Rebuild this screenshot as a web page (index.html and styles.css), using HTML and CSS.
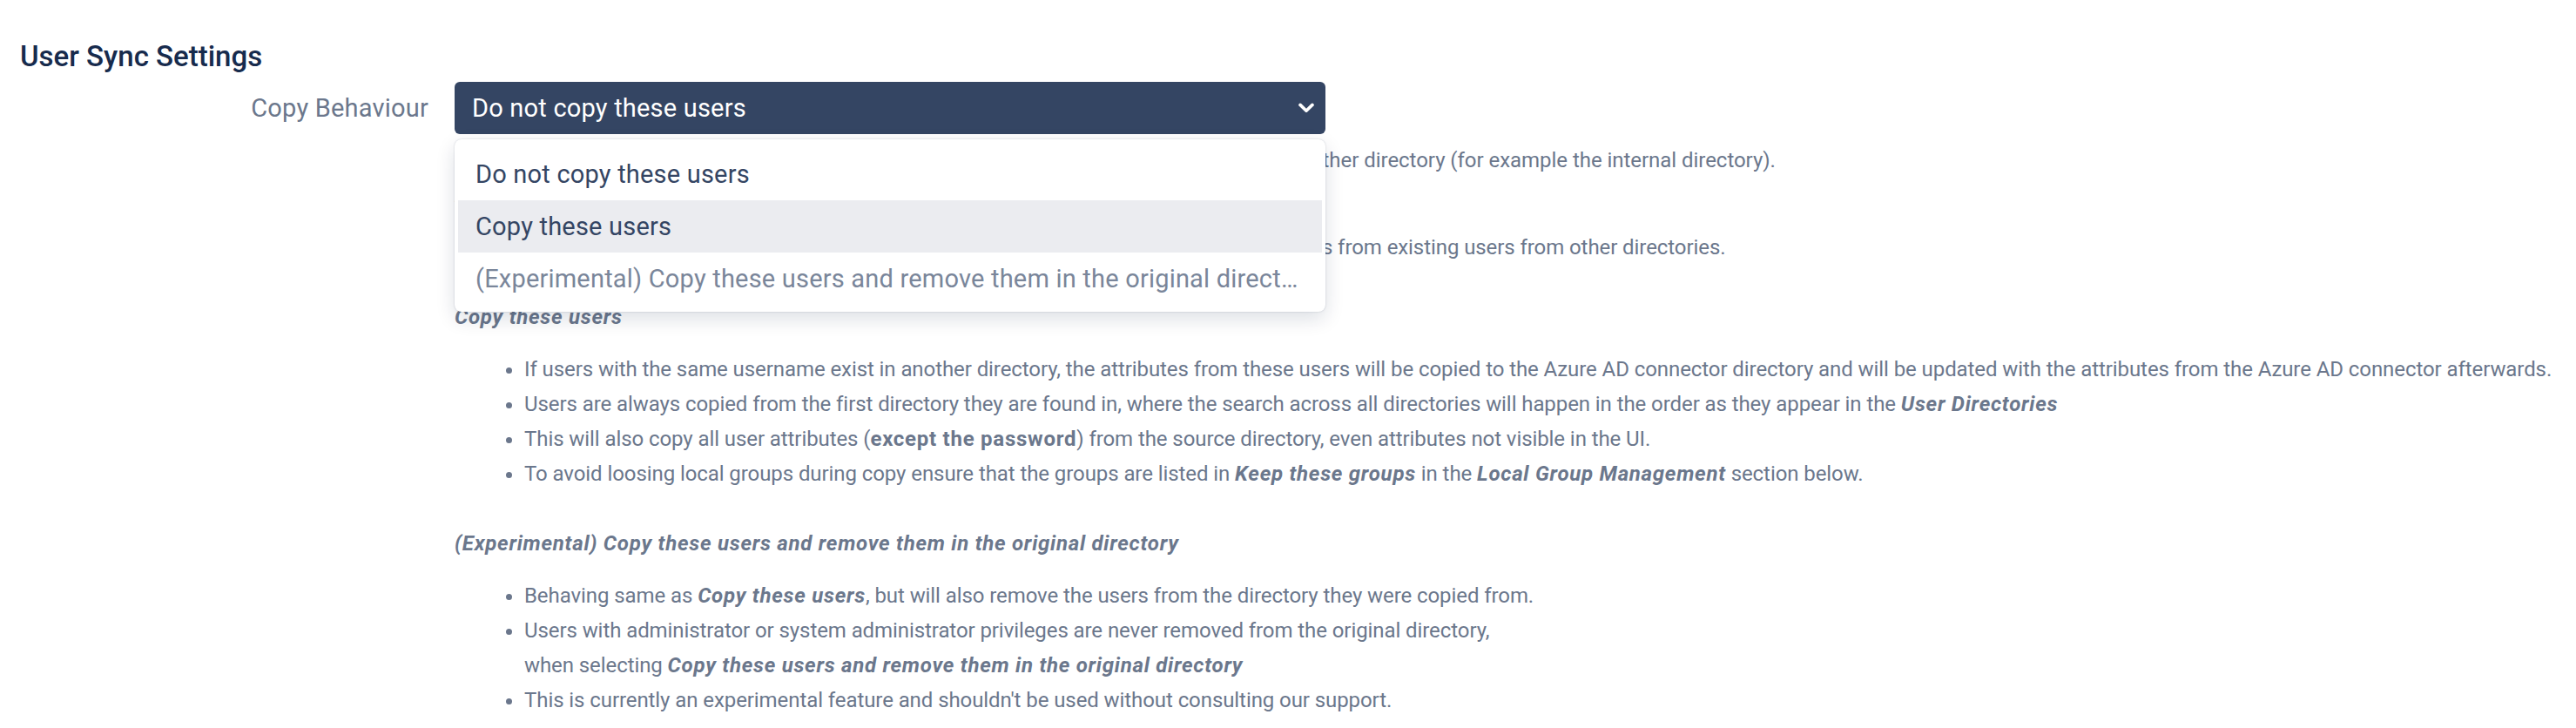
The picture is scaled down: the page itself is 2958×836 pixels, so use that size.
FILE: index.html
```html
<!DOCTYPE html>
<html lang="en">
<head>
<meta charset="utf-8">
<title>User Sync Settings</title>
<link rel="stylesheet" href="styles.css">
</head>
<body>
<div class="page">
  <h3 class="title">User Sync Settings</h3>
  <div class="row">
    <div class="label">Copy Behaviour</div>
    <div class="field">
      <div class="select">
        <span class="select-value">Do not copy these users</span>
        <svg class="chevron" width="10" height="6" viewBox="0 0 10 6" aria-hidden="true">
          <path d="M1.5 1.2 L5 4.6 L8.5 1.2" fill="none" stroke="#ffffff" stroke-width="1.8" stroke-linecap="round" stroke-linejoin="round"/>
        </svg>
      </div>
      <div class="menu">
        <div class="option">Do not copy these users</div>
        <div class="option option-active">Copy these users</div>
        <div class="option option-muted">(Experimental) Copy these users and remove them in the original direct…</div>
      </div>
      <div class="desc">
        <p class="intro">Defines how the users are handled, if a user with the same username already exists within another directory (for example the internal directory).</p>
        <p class="sec sec-first">Do not copy these users</p>
        <ul>
          <li>Users will be created in the Azure AD connector directory but will not copy any attributes from existing users from other directories.</li>
        </ul>
        <p class="sec">Copy these users</p>
        <ul>
          <li>If users with the same username exist in another directory, the attributes from these users will be copied to the Azure AD connector directory and will be updated with the attributes from the Azure AD connector afterwards.</li>
          <li>Users are always copied from the first directory they are found in, where the search across all directories will happen in the order as they appear in the <b><i>User Directories</i></b></li>
          <li>This will also copy all user attributes (<b>except the password</b>) from the source directory, even attributes not visible in the UI.</li>
          <li>To avoid loosing local groups during copy ensure that the groups are listed in <b><i>Keep these groups</i></b> in the <b><i>Local Group Management</i></b> section below.</li>
        </ul>
        <p class="sec">(Experimental) Copy these users and remove them in the original directory</p>
        <ul>
          <li>Behaving same as <b><i>Copy these users</i></b>, but will also remove the users from the directory they were copied from.</li>
          <li>Users with administrator or system administrator privileges are never removed from the original directory,<br>when selecting <b><i>Copy these users and remove them in the original directory</i></b></li>
          <li>This is currently an experimental feature and shouldn't be used without consulting our support.</li>
        </ul>
      </div>
    </div>
  </div>
</div>
</body>
</html>
```

FILE: styles.css
```css
html {
  zoom: 2;
}

body {
  margin: 0;
  background: #ffffff;
  font-family: Roboto, "Liberation Sans", Arial, sans-serif;
}

.page {
  padding: 22px 10px 0 10px;
}

.title {
  margin: 0 0 0 1.5px;
  font-size: 16.5px;
  font-weight: 500;
  line-height: 21px;
  color: #172b4d;
}

.row {
  display: flex;
  gap: 15px;
  margin-top: 4px;
}

.label {
  flex: none;
  width: 236px;
  text-align: right;
  font-size: 14.5px;
  letter-spacing: 0.1px;
  line-height: 30px;
  color: #6b778c;
}

.field {
  position: relative;
  flex: 1;
  min-width: 0;
}

.select {
  box-sizing: border-box;
  width: 500px;
  height: 30px;
  padding: 0 6px 0 10px;
  display: flex;
  align-items: center;
  justify-content: space-between;
  background: #344563;
  border-radius: 3px;
  color: #ffffff;
  font-size: 14.5px;
  letter-spacing: 0.1px;
}

.chevron {
  display: block;
}

.menu {
  position: absolute;
  top: 33px;
  left: 0;
  z-index: 2;
  box-sizing: border-box;
  width: 500px;
  padding: 5px 2px 4px;
  background: #ffffff;
  border-radius: 4px;
  box-shadow: 0 0 1px rgba(9, 30, 66, 0.22), 0 4px 11px rgba(9, 30, 66, 0.14);
}

.option {
  height: 30px;
  padding: 0 10px;
  font-size: 14.5px;
  letter-spacing: 0.1px;
  line-height: 30px;
  color: #344563;
  white-space: nowrap;
  overflow: hidden;
}

.option-active {
  background: #ebecf0;
}

.option-muted {
  color: #7a869a;
}

.desc {
  margin-top: 5px;
  font-size: 12px;
  letter-spacing: -0.04px;
  line-height: 20px;
  color: #6b778c;
  white-space: nowrap;
}

.desc p {
  margin: 0;
}

.desc .intro {
  letter-spacing: -0.02px;
}

.sec,
.desc b {
  font-weight: 700;
  letter-spacing: 0.37px;
}

.sec {
  font-style: italic;
}

.desc ul {
  margin: 10px 0 20px;
  padding-left: 40px;
}
```
